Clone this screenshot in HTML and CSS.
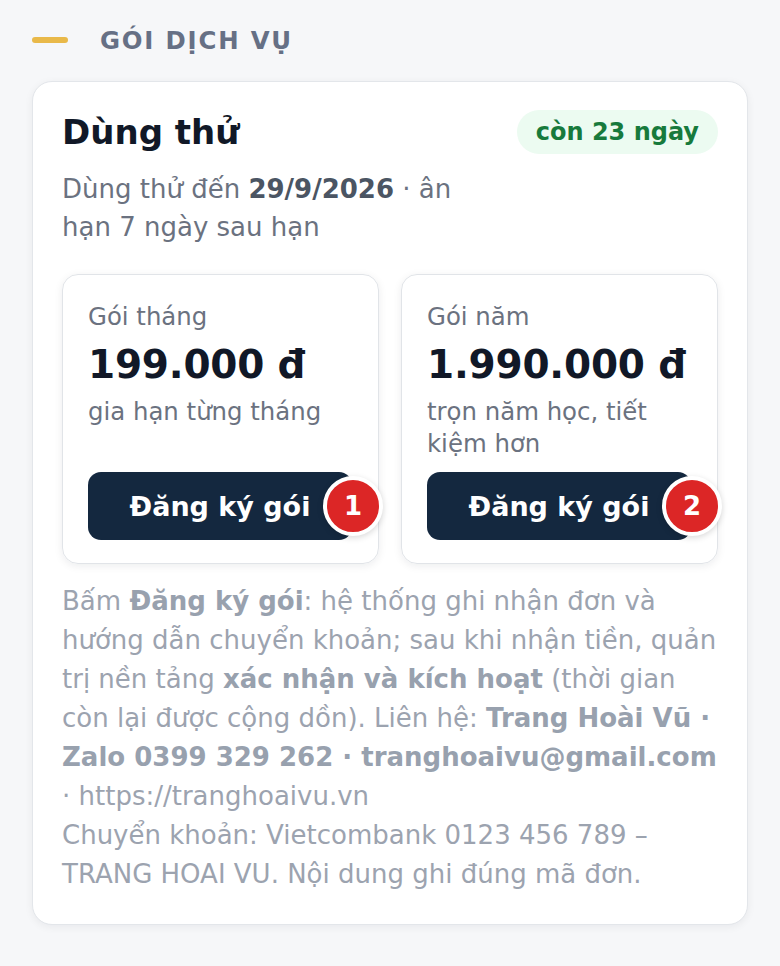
FILE: index.html
```html
<!DOCTYPE html>
<html lang="vi">
<head>
    <meta charset="utf-8">
    <title>Gói dịch vụ</title>
    <link rel="stylesheet" href="styles.css">
</head>
<body>
    <div class="page">
        <div class="section-title">
            <span class="section-bar"></span>
            <span>GÓI DỊCH VỤ</span>
        </div>

        <div class="card">
            <div class="card-head">
                <div class="head-text">
                    <h2>Dùng thử</h2>
                    <p class="trial-note">Dùng thử đến <strong>29/9/2026</strong> · ân hạn 7 ngày sau hạn</p>
                </div>
                <span class="days-left">còn 23 ngày</span>
            </div>

            <div class="plans">
                <div class="plan">
                    <div class="plan-name">Gói tháng</div>
                    <div class="plan-price">199.000 đ</div>
                    <div class="plan-desc">gia hạn từng tháng</div>
                    <button class="plan-btn">Đăng ký gói<span class="marker">1</span></button>
                </div>
                <div class="plan">
                    <div class="plan-name">Gói năm</div>
                    <div class="plan-price">1.990.000 đ</div>
                    <div class="plan-desc">trọn năm học, tiết kiệm hơn</div>
                    <button class="plan-btn">Đăng ký gói<span class="marker">2</span></button>
                </div>
            </div>

            <p class="help">
                Bấm <strong>Đăng ký gói</strong>: hệ thống ghi nhận đơn và hướng dẫn chuyển khoản; sau khi nhận tiền, quản trị nền tảng <strong>xác nhận và kích hoạt</strong> (thời gian còn lại được cộng dồn). Liên hệ: <strong>Trang Hoài Vũ · Zalo 0399 329 262 · tranghoaivu@gmail.com</strong> · https://tranghoaivu.vn<br>
                Chuyển khoản: Vietcombank 0123 456 789 – TRANG HOAI VU. Nội dung ghi đúng mã đơn.
            </p>
        </div>
    </div>
</body>
</html>
```

FILE: styles.css
```css
body {
    margin: 0;
    background: #f6f7f9;
    font-family: "DejaVu Sans", sans-serif;
    color: #111827;
}

.page {
    padding: 24px 32px 40px;
}

.section-title {
    display: flex;
    align-items: center;
    gap: 32px;
    height: 32px;
    margin-bottom: 25px;
    font-size: 24.4px;
    font-weight: bold;
    letter-spacing: 1.8px;
    color: #667085;
}

.section-bar {
    width: 36px;
    height: 6px;
    border-radius: 3px;
    background: #e9b94a;
}

.card {
    background: white;
    border: 1px solid #e3e6ea;
    border-radius: 20px;
    padding: 28px 29px 30px;
    box-shadow: 0 2px 8px rgba(16, 24, 40, 0.06);
}

.card-head {
    display: flex;
    align-items: flex-start;
    gap: 20px;
}

.head-text {
    flex: 1;
}

h2 {
    margin: 0;
    font-size: 34px;
    line-height: 44px;
    color: #111827;
}

.trial-note {
    margin: 16px 0 0;
    font-size: 26px;
    line-height: 38px;
    color: #6b7280;
}

.trial-note strong {
    color: #4b5563;
}

.days-left {
    padding: 8px 19px;
    border-radius: 22px;
    background: #ecfbf1;
    color: #177a3c;
    font-size: 24px;
    line-height: 28px;
    font-weight: bold;
    white-space: nowrap;
}

.plans {
    display: grid;
    grid-template-columns: 1fr 1fr;
    gap: 22px;
    margin-top: 28px;
}

.plan {
    display: flex;
    flex-direction: column;
    border: 1px solid #e1e4e8;
    border-radius: 16px;
    padding: 26px 26px 23px 25px;
    box-shadow: 0 2px 8px rgba(16, 24, 40, 0.08);
}

.plan-name {
    font-size: 24.4px;
    line-height: 32px;
    color: #6b7280;
}

.plan-price {
    margin-top: 8px;
    font-size: 39px;
    line-height: 47px;
    font-weight: bold;
    letter-spacing: -0.2px;
    color: #111827;
}

.plan-desc {
    margin: 8px 0 12px;
    font-size: 24.4px;
    line-height: 32px;
    color: #6b7280;
}

.plan-btn {
    position: relative;
    margin-top: auto;
    height: 68px;
    border: none;
    border-radius: 13px;
    background: #14283f;
    color: white;
    font-family: inherit;
    font-size: 27px;
    font-weight: bold;
    cursor: pointer;
}

.marker {
    position: absolute;
    right: -31px;
    top: 50%;
    transform: translateY(-50%);
    width: 52px;
    height: 52px;
    line-height: 52px;
    border: 4px solid white;
    border-radius: 50%;
    background: #dc2626;
    color: white;
    font-size: 26px;
    text-align: center;
    box-shadow: 0 2px 6px rgba(0, 0, 0, 0.15);
}

.help {
    margin: 18px 0 0;
    font-size: 26px;
    line-height: 39px;
    color: #9ca3af;
}

.help strong {
    color: #98a1ae;
}
```
